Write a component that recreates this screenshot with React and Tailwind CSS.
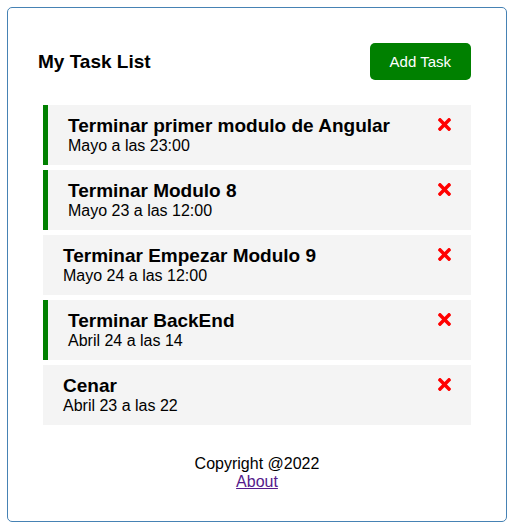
import { FaTimes } from "react-icons/fa";

const tasks = [
  { id: 1, text: "Terminar primer modulo de Angular", day: "Mayo a las 23:00", reminder: true },
  { id: 2, text: "Terminar Modulo 8", day: "Mayo 23 a las 12:00", reminder: true },
  { id: 3, text: "Terminar Empezar Modulo 9", day: "Mayo 24 a las 12:00", reminder: false },
  { id: 4, text: "Terminar BackEnd", day: "Abril 24 a las 14", reminder: true },
  { id: 5, text: "Cenar", day: "Abril 23 a las 22", reminder: false },
];

function Header() {
  return (
    <header className="mb-5 flex items-center justify-between">
      <h1 className="text-[19px] leading-[21px] font-bold">My Task List</h1>
      <button
        type="button"
        className="m-[5px] cursor-pointer rounded-[5px] bg-[#008000] px-5 py-[10px] text-[15px] leading-[17px] text-white"
      >
        Add Task
      </button>
    </header>
  );
}

function TaskItem({ task }) {
  return (
    <li
      className={
        task.reminder
          ? "border-l-[5px] border-[#008000] bg-[#f4f4f4] px-5 py-[10px]"
          : "bg-[#f4f4f4] px-5 py-[10px]"
      }
    >
      <div className="flex items-start justify-between">
        <h3 className="text-[19px] leading-[21px] font-bold">{task.text}</h3>
        <button type="button" aria-label="Delete task" className="cursor-pointer text-[#ff0000]">
          <FaTimes className="h-[19px] w-[13px]" />
        </button>
      </div>
      <p className="text-base leading-[19px]">{task.day}</p>
    </li>
  );
}

function Footer() {
  return (
    <footer className="mt-[30px] text-center text-base leading-[18px]">
      <p>Copyright @2022</p>
      <a href="#about" className="text-[#551a8b] underline">
        About
      </a>
    </footer>
  );
}

export default function App() {
  return (
    <div className="bg-white pt-[7px] pr-[5px] pb-2 pl-[7px] font-['Liberation_Sans',Arial,sans-serif] text-black">
      <main className="mx-auto max-w-[500px] rounded-[5px] border border-[#4682b4] p-[30px]">
        <Header />
        <ul className="mx-[5px] flex flex-col gap-[5px]">
          {tasks.map((task) => (
            <TaskItem key={task.id} task={task} />
          ))}
        </ul>
        <Footer />
      </main>
    </div>
  );
}
